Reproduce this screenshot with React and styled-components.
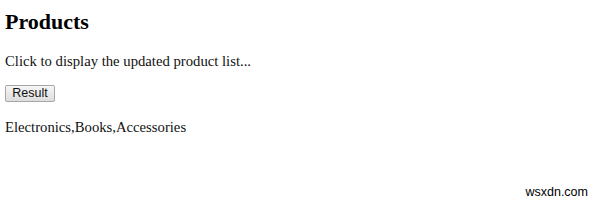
import React from "react";
import styled, { createGlobalStyle } from "styled-components";

const Global = createGlobalStyle`
  html, body { margin: 0; padding: 0; background: #fff; }
  body { font-family: "Liberation Serif", "Times New Roman", serif; color: #000; }
`;

const Page = styled.div`
  position: relative;
  width: 600px;
  height: 203px;
  box-sizing: border-box;
  padding: 8px 5px 0;
  overflow: hidden;
`;

const Title = styled.h2`
  margin: 0 0 17px;
  font-size: 22px;
  font-weight: bold;
  line-height: 27px;
`;

const Text = styled.p`
  margin: 0 0 ${(p) => p.$gap || 0}px;
  font-size: 14.7px;
  line-height: 18px;
  color: #111;
`;

const Button = styled.button`
  display: block;
  box-sizing: border-box;
  width: 50px;
  height: 17px;
  margin: 0 0 16px;
  padding: 0;
  font-family: "Liberation Sans", Arial, sans-serif;
  font-size: 12.5px;
  line-height: 15px;
  color: #111;
  background: linear-gradient(#f6f6f6, #dddddd);
  border: 1px solid #a7a7a7;
  border-radius: 2px;
`;

const Watermark = styled.div`
  position: absolute;
  right: 12px;
  bottom: 4px;
  font-family: "Liberation Sans", Arial, sans-serif;
  font-size: 12.5px;
  color: #000;
`;

export default function App() {
  return (
    <>
      <Global />
      <Page>
        <Title>Products</Title>
        <Text $gap={15}>Click to display the updated product list...</Text>
        <Button>Result</Button>
        <Text>Electronics,Books,Accessories</Text>
        <Watermark>wsxdn.com</Watermark>
      </Page>
    </>
  );
}
